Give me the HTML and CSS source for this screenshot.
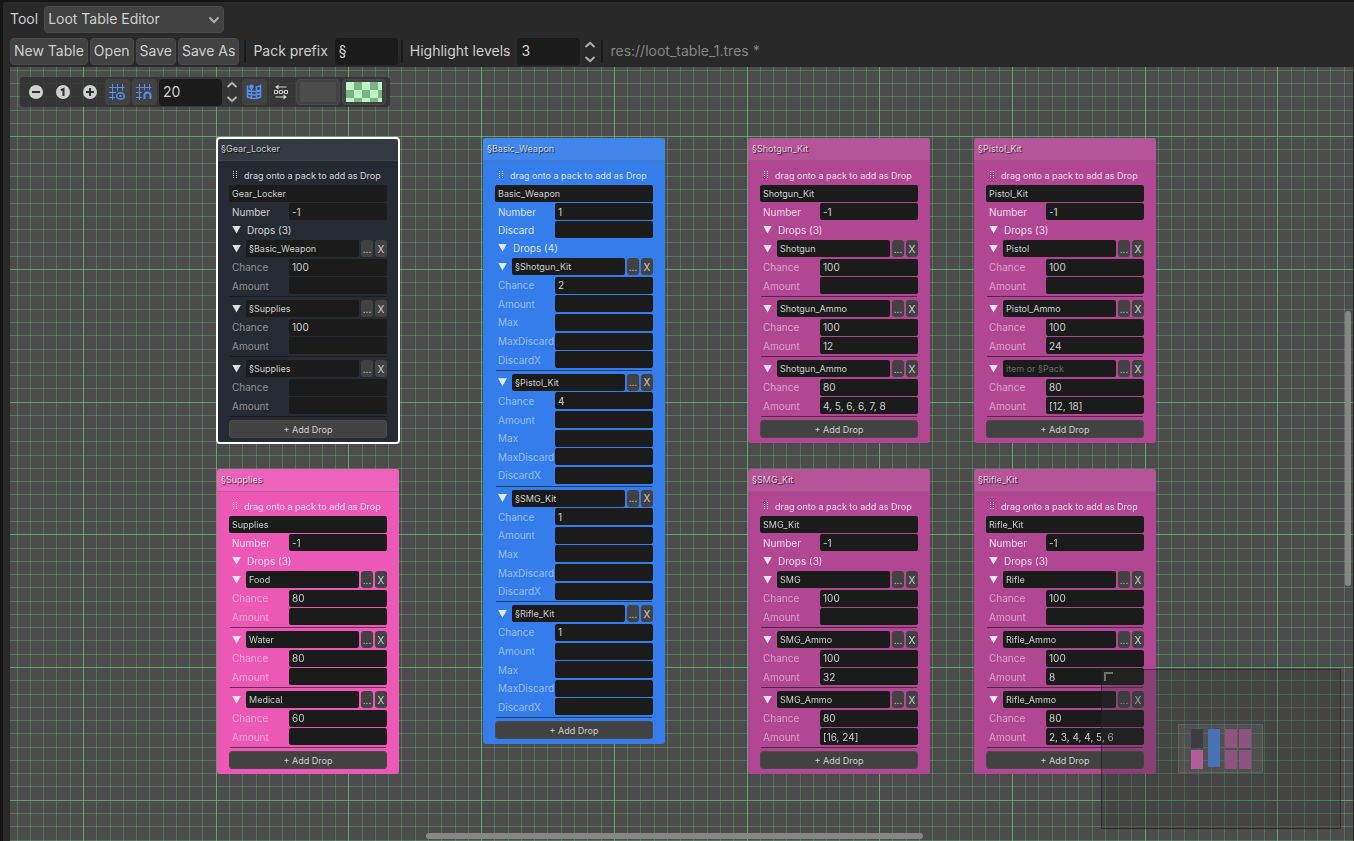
FILE: index.html
```html
<!DOCTYPE html>
<html lang="en">
<head>
    <meta charset="UTF-8">
    <meta name="viewport" content="width=device-width, initial-scale=1.0">
    <title>Loot Table Editor</title>
    <link rel="stylesheet" href="styles.css">
</head>
<body>
    <main class="panel">
        <div class="tool-row">
            <label for="tool">Tool</label>
            <span class="select-wrap">
                <select id="tool">
                    <option>Loot Table Editor</option>
                </select>
                <svg class="chevron" width="12" height="8" viewBox="0 0 12 8"><path d="M1.5 1.5 6 6l4.500-4.500"/></svg>
            </span>
        </div>

        <div class="menu-row">
            <div class="buttons">
                <button>New Table</button>
                <button>Open</button>
                <button>Save</button>
                <button>Save As</button>
            </div>
            <span class="divider"></span>
            <label for="prefix">Pack prefix</label>
            <input id="prefix" class="box" type="text" value="§">
            <span class="divider"></span>
            <label for="levels">Highlight levels</label>
            <span class="spin">
                <input id="levels" class="box" type="number" value="3">
                <svg width="12" height="22" viewBox="0 0 12 22"><path d="M1.500 6 6 1.800 10.500 6M1.500 16 6 20.200 10.500 16"/></svg>
            </span>
            <span class="divider"></span>
            <span class="path">res://loot_table_1.tres *</span>
        </div>

        <section class="graph" id="graph">
            <canvas class="grid" id="grid"></canvas>
            <div id="nodes"></div>

            <div class="graph-bar">
                <button class="icon" aria-label="Zoom out">
                    <svg width="16" height="16" viewBox="0 0 16 16"><circle class="disc" cx="8" cy="8" r="7"/><path class="cut" d="M4 8h8"/></svg>
                </button>
                <button class="icon" aria-label="Reset zoom">
                    <svg width="16" height="16" viewBox="0 0 16 16"><circle class="disc" cx="8" cy="8" r="7"/><path class="cut" d="M5.800 6.200 8.500 5V12"/></svg>
                </button>
                <button class="icon" aria-label="Zoom in">
                    <svg width="16" height="16" viewBox="0 0 16 16"><circle class="disc" cx="8" cy="8" r="7"/><path class="cut" d="M4 8h8M8 4v8"/></svg>
                </button>
                <button class="icon on" aria-label="Show grid">
                    <svg width="16" height="16" viewBox="0 0 16 16"><path d="M3.500 0v16M8.500 0v7.500M13.500 0v7M0 3.500h15.500M0 8.500h7M0 13.500h6"/><ellipse class="eye" cx="11.500" cy="12" rx="3.800" ry="3.200"/><circle class="dot" cx="11.500" cy="12" r="1.300"/></svg>
                </button>
                <button class="icon on" aria-label="Snap to grid">
                    <svg width="16" height="16" viewBox="0 0 16 16"><path d="M3.500 0v16M8.500 0v6.500M13.500 0v6M0 3.500h15.500M0 8.500h6M0 13.500h6"/><path class="thick" d="M8.500 15v-3.500a3 3 0 0 1 6 0V15"/></svg>
                </button>
                <span class="spin">
                    <input class="box" type="number" value="20" aria-label="Snapping distance">
                    <svg width="12" height="22" viewBox="0 0 12 22"><path d="M1.500 6 6 1.800 10.500 6M1.500 16 6 20.200 10.500 16"/></svg>
                </span>
                <button class="icon on" aria-label="Toggle minimap">
                    <svg width="16" height="16" viewBox="0 0 16 16"><path class="map-frame" d="M1.500 1.500v11.500q6.500 3 13 0V1.500Q12.500 3 9.500 3M1.500 6q6.500 3 13 0M1.500 9.500q6.500 3 13 0M5.500 4v10.500M10.500 3v11.500"/><circle class="dot" cx="5.500" cy="2.800" r="2.400"/></svg>
                </button>
                <button class="icon" aria-label="Arrange nodes">
                    <svg width="16" height="16" viewBox="0 0 16 16"><path class="line" d="M13.500 3H4M2.500 13H12M1.500 6.500h3v3h-3zM6.500 6.500h3v3h-3zM11.500 6.500h3v3h-3zM4.500 8h2M9.500 8h2"/><path class="fill" d="M5.500.5v5L2 3zM10.500 10.500v5L14 13z"/></svg>
                </button>
                <button class="swatch" aria-label="Background colour"><span></span></button>
                <button class="swatch checks" aria-label="Grid colour"><span></span></button>
            </div>

            <svg class="minimap" width="240" height="160" viewBox="0 0 240 160">
                <rect class="map-bg" x="0.500" y="0.500" width="239" height="159"/>
                <path class="map-corner" d="M4 12V4h8"/>
                <rect class="map-view" x="77.500" y="55.500" width="84" height="48"/>
                <g class="map-nodes">
                    <rect x="90" y="60" width="12" height="19" fill="#3d3e41"/>
                    <rect x="90" y="81" width="12" height="19" fill="#b35d96"/>
                    <rect x="107" y="60" width="12" height="38" fill="#4872b5"/>
                    <rect x="124" y="60" width="12" height="19" fill="#8e5380"/>
                    <rect x="138" y="60" width="12" height="19" fill="#8e5380"/>
                    <rect x="124" y="81" width="12" height="19" fill="#8e5380"/>
                    <rect x="138" y="81" width="12" height="19" fill="#8e5380"/>
                </g>
            </svg>
            <span class="scroll scroll-x"></span>
            <span class="scroll scroll-y"></span>
        </section>
    </main>

    <script src="script.js"></script>
</body>
</html>
```
FILE: styles.css
```css
* {
    box-sizing: border-box;
}

body {
    margin: 0;
    height: 100vh;
    overflow: hidden;
    background: #151515;
    color: #cfcfcf;
    font-family: Inter, "Noto Sans", sans-serif;
    font-size: 14px;
}

button, input, select {
    margin: 0;
    font: inherit;
    color: inherit;
}

button {
    cursor: pointer;
}

input[type="number"] {
    appearance: textfield;
    -moz-appearance: textfield;
}

input::-webkit-inner-spin-button {
    display: none;
}

svg {
    display: block;
    flex: none;
    fill: none;
    stroke: #b0b0b0;
}

/* Panel */
.panel {
    height: calc(100vh - 2px);
    margin: 2px 0 0 3px;
    padding: 4px 1px 0 7px;
    display: flex;
    flex-direction: column;
    background: #292929;
    border-top-left-radius: 3px;
}

.tool-row {
    display: flex;
    align-items: center;
    gap: 6px;
}

.tool-row label, .menu-row label, .path {
    padding-bottom: 2px;
}

.select-wrap {
    position: relative;
}

.select-wrap select {
    display: block;
    width: 180px;
    height: 27px;
    padding: 0 3px 2px;
    appearance: none;
    background: #424242;
    border: 1px solid #4a4a4a;
    border-radius: 4px;
}

.chevron {
    position: absolute;
    right: 4px;
    top: 10px;
    stroke-width: 2;
    pointer-events: none;
}

.menu-row {
    display: flex;
    align-items: center;
    height: 27px;
    margin: 5px 0 2px;
}

.buttons {
    display: flex;
    gap: 2px;
    margin-right: 2px;
}

.buttons button {
    height: 27px;
    padding: 0 3px 2px;
    background: #424242;
    border: 1px solid #4a4a4a;
    border-radius: 4px;
}

.divider {
    width: 2px;
    height: 23px;
    margin: 0 7px 0 3px;
    background: #1a1a1a;
}

.box {
    width: 63px;
    height: 27px;
    padding: 0 4px 2px;
    background: #1b1b1b;
    border: 0;
    border-radius: 4px;
}

.menu-row label + * {
    margin-left: 7px;
}

.spin {
    display: flex;
    align-items: center;
    gap: 4px;
    margin-right: 2px;
}

.spin svg {
    stroke-width: 2;
}

.path {
    color: #858585;
}

/* Graph */
.graph {
    position: relative;
    flex: 1;
    overflow: hidden;
    background: #4c4c4c;
}

.grid {
    position: absolute;
    inset: 0;
}

.graph-bar {
    position: absolute;
    left: 10px;
    top: 10px;
    height: 30px;
    padding: 0 4px;
    display: flex;
    align-items: center;
    gap: 2px;
    background: rgba(48, 48, 48, 0.8);
    border-radius: 4px;
}

.icon {
    width: 25px;
    height: 26px;
    padding: 0 0 0 4px;
    display: grid;
    align-items: center;
    justify-items: start;
    background: none;
    border: 0;
    border-radius: 4px;
}

.icon.on {
    background: #424242;
}

.icon.on svg {
    stroke: #5190f0;
}

.icon .thick {
    stroke-width: 2;
}

.icon .eye, .icon .map-frame {
    stroke-width: 1.5;
}

.icon .dot {
    fill: #5190f0;
    stroke: none;
}

.icon .disc {
    fill: #d0d0d0;
    stroke: none;
}

.icon .cut {
    stroke: #303030;
    stroke-width: 2;
}

.icon .line {
    stroke: #d0d0d0;
}

.icon .fill {
    fill: #d0d0d0;
    stroke: none;
}

.swatch {
    width: 44px;
    height: 26px;
    padding: 2px 3px;
    background: #424242;
    border: 1px solid #4a4a4a;
    border-radius: 4px;
}

.swatch span {
    display: block;
    height: 20px;
    background: #4c4c4c;
}

.checks span {
    background: repeating-conic-gradient(#7db487 0 25%, #baf5c3 0 50%) 0 0 / 16px 16px;
}

/* Loot nodes */
.node {
    position: absolute;
    width: 182px;
    display: flex;
    flex-direction: column;
    border-radius: 3px;
    color: rgba(255, 255, 255, 0.8);
    font-size: 10px;
}

.node.selected {
    outline: 2px solid #fff;
    outline-offset: -1px;
}

.node.dark { background: #262a33; }
.node.blue { background: #347deb; }
.node.pink { background: #ec58b6; }
.node.purple { background: #b14793; }

.node h2 {
    margin: 0;
    padding: 0 4px;
    font-size: 9px;
    font-weight: 400;
    line-height: 22px;
    color: rgba(255, 255, 255, 0.75);
    background: rgba(255, 255, 255, 0.07);
    border-bottom: 1px solid rgba(90, 90, 90, 0.3);
    text-shadow: 1px 1px 1px rgba(0, 0, 0, 0.7);
}

.node-body {
    flex: 1;
    display: flex;
    flex-direction: column;
    padding: 5px 12px;
}

.hint {
    display: flex;
    align-items: center;
    gap: 6px;
    height: 18px;
    margin-bottom: 1px;
    padding-left: 4px;
    font-size: 9px;
    white-space: nowrap;
}

.hint svg {
    fill: currentColor;
    stroke: none;
}

.node input {
    width: 100%;
    min-width: 0;
    height: 17px;
    padding: 0 3px;
    background: #1b1b1b;
    color: #cfcfcf;
    border: 0;
    border-radius: 2px;
}

.node .name {
    font-size: 9px;
}

.node input::placeholder {
    color: #6a6a6a;
}

.field {
    display: flex;
    align-items: center;
    justify-content: space-between;
    padding-left: 3px;
}

.node .field input {
    width: 98px;
}

.props {
    display: flex;
    flex-direction: column;
    gap: 1px;
    padding-top: 1px;
}

.drop .field span {
    opacity: 0.6;
}

.fold {
    display: flex;
    align-items: center;
    gap: 6px;
    padding: 0 0 0 3px;
    background: none;
    border: 0;
}

.fold::before {
    content: "";
    width: 9px;
    height: 8px;
    background: rgba(255, 255, 255, 0.85);
    clip-path: polygon(0 0, 100% 0, 50% 100%);
}

.drops-title {
    height: 19px;
    margin-bottom: 1px;
}

.drops {
    flex: 1;
    display: flex;
    flex-direction: column;
}

.drop {
    flex: 1;
    display: flex;
    flex-direction: column;
    justify-content: space-between;
    padding-bottom: 3px;
}

.drop-head {
    display: flex;
    gap: 2px;
}

.drop-head .fold {
    padding-right: 3px;
}

.mini {
    flex: none;
    width: 12px;
    height: 17px;
    padding: 0;
    background: #424242;
    color: #cfcfcf;
    border: 0;
    border-radius: 3px;
}

.drop hr {
    width: 156px;
    height: 1px;
    margin: 0 auto;
    border: 0;
    background: rgba(20, 20, 20, 0.6);
}

.add {
    height: 18px;
    padding: 0;
    background: #424242;
    color: #cfcfcf;
    border: 1px solid #4a4a4a;
    border-radius: 3px;
    font-size: 9px;
}

/* Overlays */
.minimap {
    position: absolute;
    right: 12px;
    bottom: 12px;
}

.map-bg {
    fill: rgba(50, 50, 50, 0.3);
    stroke: rgba(30, 30, 30, 0.6);
}

.map-view {
    fill: rgba(130, 130, 130, 0.2);
    stroke: rgba(150, 150, 150, 0.3);
}

.map-nodes {
    stroke: none;
}

.map-corner {
    stroke: #707070;
    stroke-width: 2;
}

.scroll {
    position: absolute;
    border-radius: 3px;
    background: #878787;
}

.scroll-x {
    left: 31%;
    width: 37%;
    height: 6px;
    bottom: 2px;
}

.scroll-y {
    top: 31.500%;
    height: 35.500%;
    width: 6px;
    right: 2px;
}
```
FILE: script.js
```js
const drop = (name, ...values) => ({ name, values });

const kit = (name, x, y, drops) => ({ name, x, y, h: 305, color: 'purple', number: '-1', drops });

// x and y are graph positions, h is the node height
const nodes = [
    { name: 'Gear_Locker', x: 207, y: 71, h: 305, color: 'dark', selected: true, number: '-1',
      drops: [drop('§Basic_Weapon', '100'), drop('§Supplies', '100'), drop('§Supplies')] },
    { name: 'Supplies', x: 207, y: 402, h: 305, color: 'pink', number: '-1',
      drops: [drop('Food', '80'), drop('Water', '80'), drop('Medical', '60')] },
    { name: 'Basic_Weapon', x: 473, y: 71, h: 606, color: 'blue', number: '1', discard: true,
      drops: [drop('§Shotgun_Kit', '2'), drop('§Pistol_Kit', '4'), drop('§SMG_Kit', '1'), drop('§Rifle_Kit', '1')] },
    kit('Shotgun_Kit', 738, 71, [drop('Shotgun', '100'), drop('Shotgun_Ammo', '100', '12'), drop('Shotgun_Ammo', '80', '4, 5, 6, 6, 7, 8')]),
    kit('Pistol_Kit', 964, 71, [drop('Pistol', '100'), drop('Pistol_Ammo', '100', '24'), drop('', '80', '[12, 18]')]),
    kit('SMG_Kit', 738, 402, [drop('SMG', '100'), drop('SMG_Ammo', '100', '32'), drop('SMG_Ammo', '80', '[16, 24]')]),
    kit('Rifle_Kit', 964, 402, [drop('Rifle', '100'), drop('Rifle_Ammo', '100', '8'), drop('Rifle_Ammo', '80', '2, 3, 4, 4, 5, 6')]),
];

const field = (label, value = '') =>
    `<label class="field"><span>${label}</span><input type="text" value="${value}"></label>`;

const dropHtml = (d, labels) => `
    <div class="drop">
        <div class="drop-head">
            <button class="fold" aria-label="Fold drop"></button>
            <input class="name" type="text" value="${d.name}" placeholder="item or §Pack" aria-label="Drop name">
            <button class="mini">...</button>
            <button class="mini">X</button>
        </div>
        ${labels.map((label, i) => field(label, d.values[i])).join('')}
        <hr>
    </div>`;

const nodeHtml = n => {
    const labels = n.discard ? ['Chance', 'Amount', 'Max', 'MaxDiscard', 'DiscardX'] : ['Chance', 'Amount'];
    return `
    <article class="node ${n.color} ${n.selected ? 'selected' : ''}" style="left: ${n.x}px; top: ${n.y}px; height: ${n.h}px">
        <h2>§${n.name}</h2>
        <div class="node-body">
            <div class="hint">
                <svg width="5" height="8" viewBox="0 0 5 8"><path d="M0 0h1v1H0zM3 0h1v1H3zM0 2h1v1H0zM3 2h1v1H3zM0 4h1v1H0zM3 4h1v1H3zM0 6h1v1H0zM3 6h1v1H3z"/></svg>
                drag onto a pack to add as Drop
            </div>
            <input class="name" type="text" value="${n.name}" aria-label="Pack name">
            <div class="props">
                ${field('Number', n.number)}
                ${n.discard ? field('Discard') : ''}
            </div>
            <button class="fold drops-title">Drops (${n.drops.length})</button>
            <div class="drops">${n.drops.map(d => dropHtml(d, labels)).join('')}</div>
            <button class="add">+ Add Drop</button>
        </div>
    </article>`;
};

document.getElementById('nodes').innerHTML = nodes.map(nodeHtml).join('');

// Grid: every tenth line is a major one
const graph = document.getElementById('graph');
const grid = document.getElementById('grid');
const step = 13.27;
const origin = { x: 73, y: 69.2 };

const drawGrid = () => {
    grid.width = graph.clientWidth;
    grid.height = graph.clientHeight;
    const ctx = grid.getContext('2d');
    const line = (i, start, vertical) => {
        const at = Math.round(start + i * step);
        ctx.fillStyle = i % 10 === 0 ? 'rgba(103, 190, 120, 0.75)' : 'rgba(103, 190, 120, 0.35)';
        vertical ? ctx.fillRect(at, 0, 1, grid.height) : ctx.fillRect(0, at, grid.width, 1);
    };
    for (const major of [false, true]) {
        for (let i = -10; i < 300; i++) {
            if ((i % 10 === 0) !== major) continue;
            line(i, origin.x, true);
            line(i, origin.y, false);
        }
    }
};

drawGrid();
window.addEventListener('resize', drawGrid);
```
